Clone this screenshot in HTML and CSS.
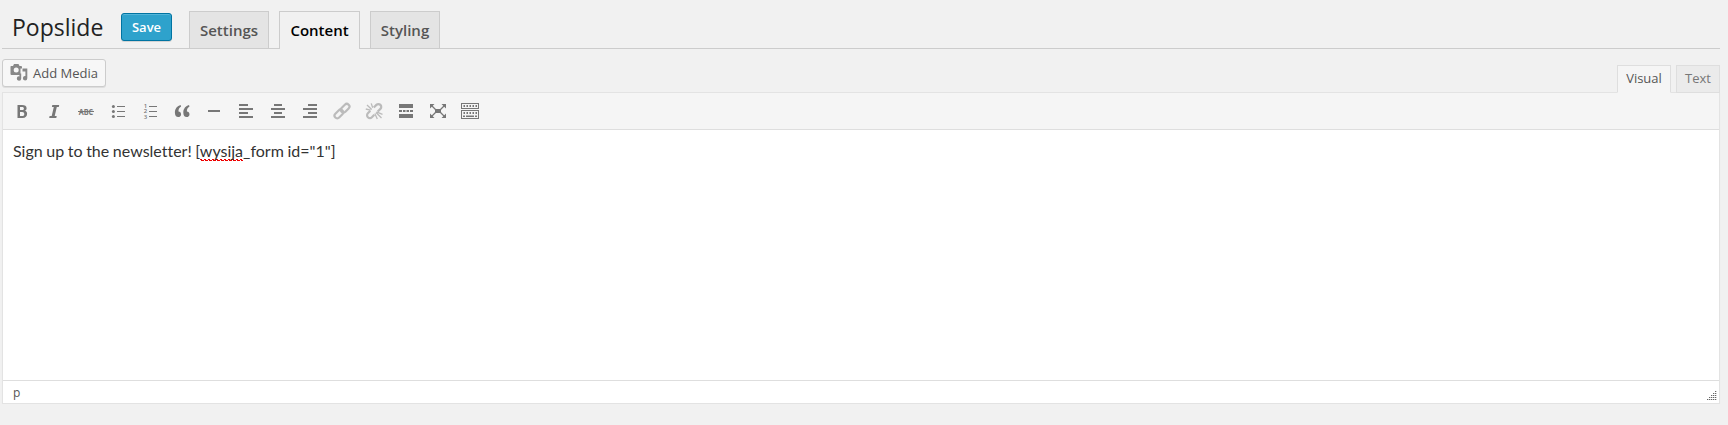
FILE: index.html
```html
<!DOCTYPE html>
<html lang="en">
<head>
<meta charset="utf-8">
<title>Popslide</title>
<link rel="stylesheet" href="styles.css">
</head>
<body>
<div class="wrap">
  <header class="head">
    <h1 class="title">Popslide</h1>
    <button class="save">Save</button>
    <nav class="tabs">
      <a class="tab">Settings</a>
      <a class="tab tab-active">Content</a>
      <a class="tab">Styling</a>
    </nav>
  </header>
  <div class="tools">
    <button class="media">
      <svg class="media-icon" width="18" height="18" viewBox="0 0 18 18"><path fill="#888" fill-rule="evenodd" d="M1 2h2l1-2h4.500l1 2H11q1 0 1 1v1.500h-1.500V11H1.500q-1 0-1-1V3Q.500 2 1 2zM6.200 3.500a2.500 2.500 0 1 0 0 5 2.500 2.500 0 0 0 0-5z"/><path fill="#888" d="M12.500 4.500H17.300v9.700a2.200 2.200 0 1 1-1.900-2.200V7.500h-2.900zM11.200 9.500v5a2.200 2.200 0 1 1-1.800-2.100V9.500z"/></svg>
      <span>Add Media</span>
    </button>
    <div class="modes">
      <a class="mode mode-active">Visual</a>
      <a class="mode">Text</a>
    </div>
  </div>
  <section class="editor">
    <div class="toolbar">
      <svg class="icon" viewBox="0 0 20 20"><path fill-rule="evenodd" d="M5.500 4H10c3 0 4.600 1 4.600 3.200 0 1.400-.8 2.300-2 2.600 1.600.3 2.500 1.200 2.500 2.900C15.100 15.300 13.400 17 10.600 17H5.500zM8 6v3h1.900c1.400 0 2-.5 2-1.500S11.200 6 9.900 6zm0 4.900V15h2.200c1.400 0 2.100-.8 2.100-2.100 0-1.300-.7-2-2.200-2z"/></svg>
      <svg class="icon" viewBox="0 0 20 20"><path d="M8.300 4h6.900l-.4 1.900h-2l-2.100 9.200h2l-.4 1.900H5.200l.4-1.900h2.100l2.100-9.200H7.900z"/></svg>
      <svg class="icon" viewBox="0 0 20 20"><text class="abc" x="2.700" y="13.500" textLength="14.500" lengthAdjust="spacingAndGlyphs">ABC</text><path d="M2 10h16v1H2z"/></svg>
      <svg class="icon" viewBox="0 0 20 20"><circle cx="5.400" cy="5.500" r="1.500"/><circle cx="5.400" cy="10.500" r="1.500"/><circle cx="5.400" cy="15.500" r="1.500"/><path d="M9 5h8v1H9zm0 5h8v1H9zm0 5h8v1H9z"/></svg>
      <svg class="icon" viewBox="0 0 20 20"><path d="M9 5h8v1H9zm0 5h8v1H9zm0 5h8v1H9z"/><g class="digits"><text x="3.800" y="7.300">1</text><text x="3.800" y="12.400">2</text><text x="3.800" y="17.500">3</text></g></svg>
      <svg class="icon" viewBox="0 0 20 20"><path id="quote" d="M8.600 4C5.400 4.800 2.900 7.700 2.900 11.400c0 2.900 1.300 4.700 3.300 4.700 1.700 0 2.900-1.200 2.900-2.900 0-1.600-1.100-2.700-2.600-2.800-.2-1.900.8-3.900 2.600-4.900z"/><use href="#quote" x="8.400"/></svg>
      <svg class="icon" viewBox="0 0 20 20"><path d="M4 9h12v2H4z"/></svg>
      <svg class="icon" viewBox="0 0 20 20"><path d="M3 3h9v2H3zm0 4h14v2H3zm0 4h9v2H3zm0 4h14v2H3z"/></svg>
      <svg class="icon" viewBox="0 0 20 20"><path d="M6 3h8v2H6zM3 7h14v2H3zm3 4h8v2H6zm-3 4h14v2H3z"/></svg>
      <svg class="icon" viewBox="0 0 20 20"><path d="M8 3h9v2H8zM3 7h14v2H3zm5 4h9v2H8zm-5 4h14v2H3z"/></svg>
      <svg class="icon off" viewBox="0 0 20 20"><g class="chain"><rect x="8.100" y="4.500" width="10" height="5.400" rx="2.700" transform="rotate(-45 13.100 7.200)"/><rect x="1.900" y="10.300" width="10" height="5.400" rx="2.700" transform="rotate(-45 6.900 13)"/></g></svg>
      <svg class="icon off" viewBox="0 0 20 20"><g class="chain"><path d="M9.800 6.500l2.600-2.600a2.800 2.800 0 0 1 4 4L13.700 10.500M6.300 9.800l-2.400 2.400a2.800 2.800 0 0 0 4 4L10.300 13.800"/></g><path class="rays" d="M3 4l4.700 4.500M7.200 2.400l1.500 4.400M1.800 8l4.700 1.200M12 11.500l5.500 5.500M10.800 12.500l2.500 5.500M12.500 10.800l6 2.500"/></svg>
      <svg class="icon" viewBox="0 0 20 20"><path d="M3 3h14v4H3zm0 6h3v2H3zm4 0h2.500v2H7zm3.500 0H13v2h-2.500zM14 9h3v2h-3zM3 13h14v4H3z"/></svg>
      <svg class="icon" viewBox="0 0 20 20"><path d="M7 8h6v4H7zM2 3h4.500L2 7.500zm16 0h-4.500L18 7.500zM2 17h4.500L2 12.500zm16 0h-4.500l4.500-4.500z"/><path class="thin" d="M3 4l5 5M17 4l-5 5M3 16l5-5M17 16l-5-5"/></svg>
      <svg class="icon" viewBox="0 0 20 20"><path fill-rule="evenodd" d="M1 2h18v6H1zm1 1v4h16V3zM1 9h18v9H1zm1 1v7h16v-7z"/><path d="M3.500 4H5v2H3.500zm3 0H8v2H6.500zm3 0H11v2H9.500zm3 0H14v2h-1.500zm3 0H17v2h-1.500zM3.500 11H5v2H3.500zm3 0H8v2H6.500zm3 0H11v2H9.500zm3 0H14v2h-1.500zm3 0H17v2h-1.500zM3 14.500h2V16H3zm3 0h8V16H6zm9 0h2V16h-2z"/></svg>
    </div>
    <div class="content">Sign up to the newsletter! [<span class="misspelled">wysija</span>_form id="1"]</div>
    <div class="status"><span>p</span>
      <svg class="grip" width="10" height="9" viewBox="0 0 10 9"><path stroke="#666" stroke-width="1" stroke-dasharray="1.300 .7" d="M8 .5h2M6 2.500h4M4 4.500h6M2 6.500h8M0 8.500h10"/></svg>
    </div>
  </section>
</div>
</body>
</html>
```
FILE: styles.css
```css
* { box-sizing: border-box; }
body {
  margin: 0;
  background: #f1f1f1;
  color: #444;
  font: 13px "Open Sans", sans-serif;
}
.wrap { width: 1720px; padding-left: 2px; }
.head {
  display: flex;
  height: 49px;
  border-bottom: 1px solid #ccc;
}
.title {
  width: 119px;
  margin: 0;
  padding: 11px 0 0 10px;
  color: #222;
  font-size: 23px;
  line-height: 32px;
  font-weight: 400;
}
.save {
  width: 51px;
  height: 28px;
  margin: 13px 17px 0 0;
  padding: 0;
  border: 1px solid #0074a2;
  border-radius: 3px;
  background: #2ea2cc;
  box-shadow: inset 0 1px 0 rgba(120, 200, 230, .5), 0 1px 0 rgba(0, 0, 0, .12);
  color: #fff;
  font: 600 13px/26px "Open Sans", sans-serif;
}
.tabs { display: flex; gap: 10px; padding-top: 11px; }
.tab {
  height: 37px;
  width: 80px;
  border: 1px solid #ccc;
  border-bottom: 0;
  background: #e4e4e4;
  color: #555;
  font-size: 15px;
  font-weight: 600;
  line-height: 37px;
  text-align: center;
}
.tab:last-child { width: 70px; }
.tab-active {
  width: 81px;
  height: 38px;
  background: #f1f1f1;
  color: #000;
}
.tools {
  display: flex;
  justify-content: space-between;
  height: 43px;
}
.media {
  display: flex;
  width: 104px;
  height: 28px;
  margin-top: 10px;
  padding: 4px 0 0 7px;
  gap: 5px;
  border: 1px solid #ccc;
  border-radius: 3px;
  background: #f7f7f7;
  box-shadow: 0 1px 0 rgba(0, 0, 0, .08);
  color: #555;
  font: 13px/18px "Open Sans", sans-serif;
}
.modes { display: flex; gap: 5px; padding-top: 16px; }
.mode {
  width: 44px;
  height: 28px;
  border: 1px solid #dedede;
  background: #ebebeb;
  color: #777;
  line-height: 25px;
  text-align: center;
}
.mode-active {
  position: relative;
  width: 54px;
  border-bottom-color: #f5f5f5;
  background: #f5f5f5;
  color: #555;
}
.editor {
  height: 312px;
  border: 1px solid #e3e3e3;
  background: #fff;
  box-shadow: 0 1px 1px rgba(0, 0, 0, .04);
}
.toolbar {
  display: flex;
  gap: 12px;
  height: 37px;
  padding: 8px 9px;
  border-bottom: 1px solid #dedede;
  background: #f5f5f5;
}
.icon { width: 20px; height: 20px; fill: #777; }
.off { opacity: .45; }
.chain { fill: none; stroke: #777; stroke-width: 2.2; }
.rays, .thin { fill: none; stroke: #777; stroke-width: 1.3; }
.abc { font: 700 8px "Open Sans", sans-serif; }
.digits { font: 600 6px "Open Sans", sans-serif; }
.content {
  height: 250px;
  padding: 9px 10px;
  color: #333;
  font: 16px/24px Lato, sans-serif;
  font-variant-ligatures: none;
  word-spacing: -.5px;
}
.misspelled {
  padding-bottom: 1px;
  background:
    linear-gradient(90deg, #e00 2px, transparent 2px) 0 calc(100% - 1px) / 4px 1px repeat-x,
    linear-gradient(90deg, transparent 1px, #e00 1px) 0 100% / 4px 1px repeat-x;
}
.status {
  display: flex;
  justify-content: space-between;
  height: 23px;
  padding: 2px 2px 2px 10px;
  border-top: 1px solid #dedede;
  color: #555;
  font-size: 12px;
  line-height: 19px;
}
.grip { margin-top: 8px; }
```
